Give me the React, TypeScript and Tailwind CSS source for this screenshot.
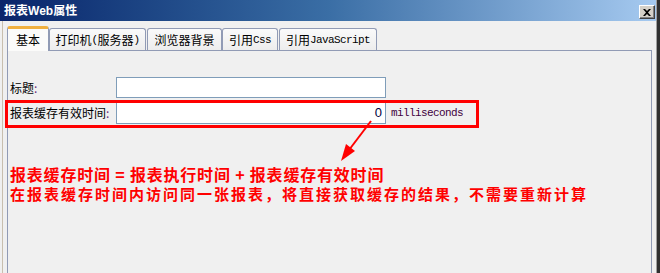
import type { ReactNode } from 'react';

const cjk = "font-['Noto_Sans_CJK_SC','Noto_Sans',sans-serif]";

function Mono({ children, className = '' }: { children: ReactNode; className?: string }) {
  return (
    <span className={`font-['Liberation_Mono',monospace] text-[11px] tracking-[-0.6px] ${className}`}>
      {children}
    </span>
  );
}

function Tab({ label, width, active }: { label: ReactNode; width: string; active?: boolean }) {
  if (active) {
    return (
      <div
        className={`${width} relative z-10 -mb-px flex h-[25px] items-center justify-center rounded-t-[3px] border-x border-[#919bb5] border-t-[3px] border-t-[#f0b040] bg-[#fbfbfa] text-[12px] text-black`}
      >
        {label}
      </div>
    );
  }
  return (
    <div
      className={`${width} flex h-[22px] items-center justify-center rounded-t-[3px] border-x border-t border-[#919bb5] bg-gradient-to-b from-[#fafafa] to-[#ededed] pt-px text-[12px] text-black`}
    >
      {label}
    </div>
  );
}

function Colon() {
  return <span className="text-[#6a2c7a]">:</span>;
}

export default function App() {
  return (
    <div className={`relative flex h-[273px] w-[660px] overflow-hidden bg-[#f0f0f0] ${cjk}`}>
      <div className="flex w-[656px] flex-col">
        {/* title bar */}
        <div className="flex h-[21px] shrink-0 items-start justify-between bg-gradient-to-r from-[#0a246a] via-[#3a6ea5] to-[#a6caf0] pl-[4px] pr-px">
          <span className="pt-[2px] text-[12px] font-bold leading-[16px] text-white">
            报表<span className="font-['Liberation_Sans',sans-serif]">Web</span>属性
          </span>
          <button className="mt-[5px] flex h-[14px] w-[16px] items-center justify-center border border-t-white border-l-white border-r-[#404040] border-b-[#404040] bg-[#d4d0c8] shadow-[inset_-1px_-1px_0_#808080]">
            <svg width="8" height="7" viewBox="0 0 8 7" className="text-black">
              <path d="M0,0 h2 l2,2 l2,-2 h2 l-3,3.5 l3,3.5 h-2 l-2,-2 l-2,2 h-2 l3,-3.5 z" fill="currentColor" />
            </svg>
          </button>
        </div>

        {/* body */}
        <div className="flex flex-1">
          <div className="w-[7px] shrink-0">
            <div className="ml-[2px] h-full w-px bg-[#c9bfae]" />
          </div>

          <div className="flex w-[645px] flex-col">
            {/* tabs */}
            <div className="mt-[5px] flex items-end">
              <Tab active width="w-[42px]" label="基本" />
              <Tab width="w-[97px]" label={<>打印机<Mono>(</Mono>服务器<Mono>)</Mono></>} />
              <Tab width="ml-px w-[75px]" label="浏览器背景" />
              <Tab width="w-[56px]" label={<>引用<Mono>Css</Mono></>} />
              <Tab width="ml-px w-[98px]" label={<>引用<Mono>JavaScript</Mono></>} />
            </div>

            {/* panel */}
            <div className="flex flex-1 flex-col border-x border-t border-[#919bb5] pl-[2px] pt-[26px]">
              <div className="flex h-[21px] items-center">
                <span className="w-[106px] text-[12px] text-black">
                  标题<Colon />
                </span>
                <div className="h-[21px] w-[270px] border border-[#7f9db9] bg-white" />
              </div>
              <div className="mt-[4px] flex h-[22px] items-center">
                <span className="w-[106px] text-[12px] text-black">
                  报表缓存有效时间<Colon />
                </span>
                <div className="flex h-[22px] w-[270px] items-center justify-end border border-[#7f9db9] bg-white pr-[3px] font-['Liberation_Sans',sans-serif] text-[13px] text-[#000040]">
                  0
                </div>
                <Mono className="ml-[5px] text-[#400040]">milliseconds</Mono>
              </div>

              <div className="mt-[40px] font-bold text-[#ff0000]">
                <div className="text-[16px] leading-[20px] tracking-[0.8px]">
                  报表缓存时间 = 报表执行时间 + 报表缓存有效时间
                </div>
                <div className="text-[15px] leading-[19px] tracking-[2px]">
                  在报表缓存时间内访问同一张报表，将直接获取缓存的结果，不需要重新计算
                </div>
              </div>
            </div>
          </div>
        </div>
      </div>

      {/* right window frame */}
      <div className="flex w-[4px] shrink-0">
        <div className="w-px bg-[#a0a0a0]" />
        <div className="flex-1 bg-[#303030]" />
      </div>

      {/* annotation overlays */}
      <div className="pointer-events-none absolute left-[5px] top-[100px] h-[28px] w-[474px] border-[3px] border-[#ff0000]" />
      <svg className="pointer-events-none absolute left-0 top-0" width="660" height="273">
        <line x1="371" y1="121" x2="349" y2="150" stroke="#ff0000" strokeWidth="2" />
        <polygon points="341,161 355,151 346,144" fill="#ff0000" />
      </svg>
    </div>
  );
}
